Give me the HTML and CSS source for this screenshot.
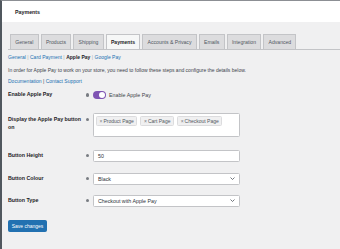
FILE: index.html
```html
<!DOCTYPE html>
<html lang="en">
<head>
    <meta charset="UTF-8">
    <meta name="viewport" content="width=device-width, initial-scale=1.0">
    <title>Payments</title>
    <link rel="stylesheet" href="styles.css">
</head>
<body>
    <!-- Page header -->
    <div class="page-header">
        <h1>Payments</h1>
    </div>

    <div class="wrap">
        <!-- Settings tabs -->
        <nav class="tabs">
            <a class="tab" href="#">General</a>
            <a class="tab" href="#">Products</a>
            <a class="tab" href="#">Shipping</a>
            <a class="tab active" href="#">Payments</a>
            <a class="tab" href="#">Accounts &amp; Privacy</a>
            <a class="tab" href="#">Emails</a>
            <a class="tab" href="#">Integration</a>
            <a class="tab" href="#">Advanced</a>
        </nav>

        <ul class="subnav">
            <li><a href="#">General</a> |</li>
            <li><a href="#">Card Payment</a> |</li>
            <li><span class="current">Apple Pay</span> |</li>
            <li><a href="#">Google Pay</a></li>
        </ul>

        <p class="intro">In order for Apple Pay to work on your store, you need to follow these steps and configure the details below.</p>
        <p class="links"><a href="#">Documentation</a> | <a href="#">Contact Support</a></p>

        <!-- Settings form -->
        <form class="settings">
            <div class="row row-toggle">
                <label class="row-label">Enable Apple Pay</label>
                <span class="help"></span>
                <div class="field toggle-field">
                    <span class="toggle"><span class="knob"></span></span>
                    <span>Enable Apple Pay</span>
                </div>
            </div>

            <div class="row row-multi">
                <label class="row-label">Display the Apple Pay button on</label>
                <span class="help"></span>
                <div class="field multi">
                    <span class="chip"><span class="x">×</span>Product Page</span>
                    <span class="chip"><span class="x">×</span>Cart Page</span>
                    <span class="chip"><span class="x">×</span>Checkout Page</span>
                </div>
            </div>

            <div class="row">
                <label class="row-label">Button Height</label>
                <span class="help"></span>
                <div class="field input">50</div>
            </div>

            <div class="row row-tight">
                <label class="row-label">Button Colour</label>
                <span class="help"></span>
                <div class="field input select">
                    <span>Black</span>
                    <svg class="arrow" width="5" height="3" viewBox="0 0 5 3"><path d="M0.5 0.5 L2.5 2.5 L4.5 0.5" fill="none" stroke="#50575e" stroke-width="0.8"/></svg>
                </div>
            </div>

            <div class="row">
                <label class="row-label">Button Type</label>
                <span class="help"></span>
                <div class="field input select">
                    <span>Checkout with Apple Pay</span>
                    <svg class="arrow" width="5" height="3" viewBox="0 0 5 3"><path d="M0.5 0.5 L2.5 2.5 L4.5 0.5" fill="none" stroke="#50575e" stroke-width="0.8"/></svg>
                </div>
            </div>

            <button class="save" type="button">Save changes</button>
        </form>
    </div>
</body>
</html>
```

FILE: styles.css
```css
body {
    margin: 0;
    height: 249px;
    background: #f0f0f1;
    border-top: 1px solid #8c8f94;
    border-left: 2px solid #50575e;
    box-sizing: border-box;
    font-family: "Liberation Sans", Arial, sans-serif;
    font-size: 5.3px;
    color: #3c434a;
}
a {
    color: #2271b1;
    text-decoration: none;
}
.page-header {
    background: #fff;
    height: 21px;
    display: flex;
    align-items: center;
    padding-left: 13px;
}
.page-header h1 {
    margin: 0;
    font-size: 5.3px;
    font-weight: 600;
    color: #1d2327;
}
.wrap {
    padding: 12px 0 0 6px;
}
.tabs {
    display: flex;
    border-bottom: 1px solid #c3c4c7;
    padding-left: 2px;
}
.tab {
    height: 14px;
    line-height: 14px;
    padding: 0 4.2px;
    margin-right: 2.2px;
    border: 1px solid #c3c4c7;
    border-bottom: none;
    background: #dcdcde;
    color: #50575e;
    font-size: 5.1px;
}
.tab.active {
    background: #f6f7f7;
    color: #1d2327;
    font-weight: 600;
    margin-bottom: -1px;
}
.subnav {
    list-style: none;
    margin: 4px 0 0;
    padding: 0;
    display: flex;
    gap: 1.5px;
    color: #a7aaad;
    font-size: 5px;
}
.subnav .current {
    color: #1d2327;
    font-weight: 600;
}
.intro {
    margin: 7px 0 0;
    font-size: 5px;
}
.links {
    margin: 5px 0 0;
    font-size: 5px;
    color: #3c434a;
}
.settings {
    margin-top: 7px;
}
.row {
    display: grid;
    grid-template-columns: 78px 7px 147px;
    align-items: center;
    margin-bottom: 11px;
}
.row-toggle {
    margin-bottom: 14px;
}
.row-multi {
    align-items: start;
    margin-bottom: 13px;
}
.row-tight {
    margin-bottom: 10px;
}
.row-label {
    font-weight: 600;
    color: #1d2327;
    line-height: 7.5px;
}
.help {
    width: 3.4px;
    height: 3.4px;
    border-radius: 50%;
    background: #787c82;
}
.toggle-field {
    display: flex;
    align-items: center;
    gap: 3px;
}
.toggle {
    width: 13px;
    height: 8px;
    border-radius: 4px;
    background: #7f54b3;
    display: flex;
    align-items: center;
    justify-content: flex-end;
    padding: 0 1px;
    box-sizing: border-box;
}
.knob {
    width: 6px;
    height: 6px;
    border-radius: 50%;
    background: #fff;
}
.row-multi .row-label {
    margin-top: 3px;
}
.row-multi .help {
    margin-top: 5px;
}
.field {
    background: #fff;
    border: 1px solid #c3c4c7;
    border-radius: 1.5px;
    box-sizing: border-box;
}
.toggle-field {
    background: none;
    border: none;
}
.multi {
    height: 24px;
    display: flex;
    align-items: flex-start;
    gap: 3px;
    padding: 2px;
}
.chip {
    height: 8px;
    line-height: 8px;
    padding: 0 2.6px;
    background: #f0f0f1;
    border: 1px solid #dcdcde;
    border-radius: 1.5px;
    color: #50575e;
    font-size: 5px;
}
.chip .x {
    margin-right: 1px;
    color: #787c82;
}
.input {
    height: 11.5px;
    display: flex;
    align-items: center;
    padding: 0 4px;
    color: #2c3338;
}
.select {
    justify-content: space-between;
    height: 12px;
}
.arrow {
    display: block;
}
.save {
    margin-top: 2px;
    width: 39px;
    height: 12px;
    padding: 0;
    border: 1px solid #2271b1;
    border-radius: 1.5px;
    background: #2271b1;
    color: #fff;
    font-family: "Liberation Sans", Arial, sans-serif;
    font-size: 5px;
}
```
